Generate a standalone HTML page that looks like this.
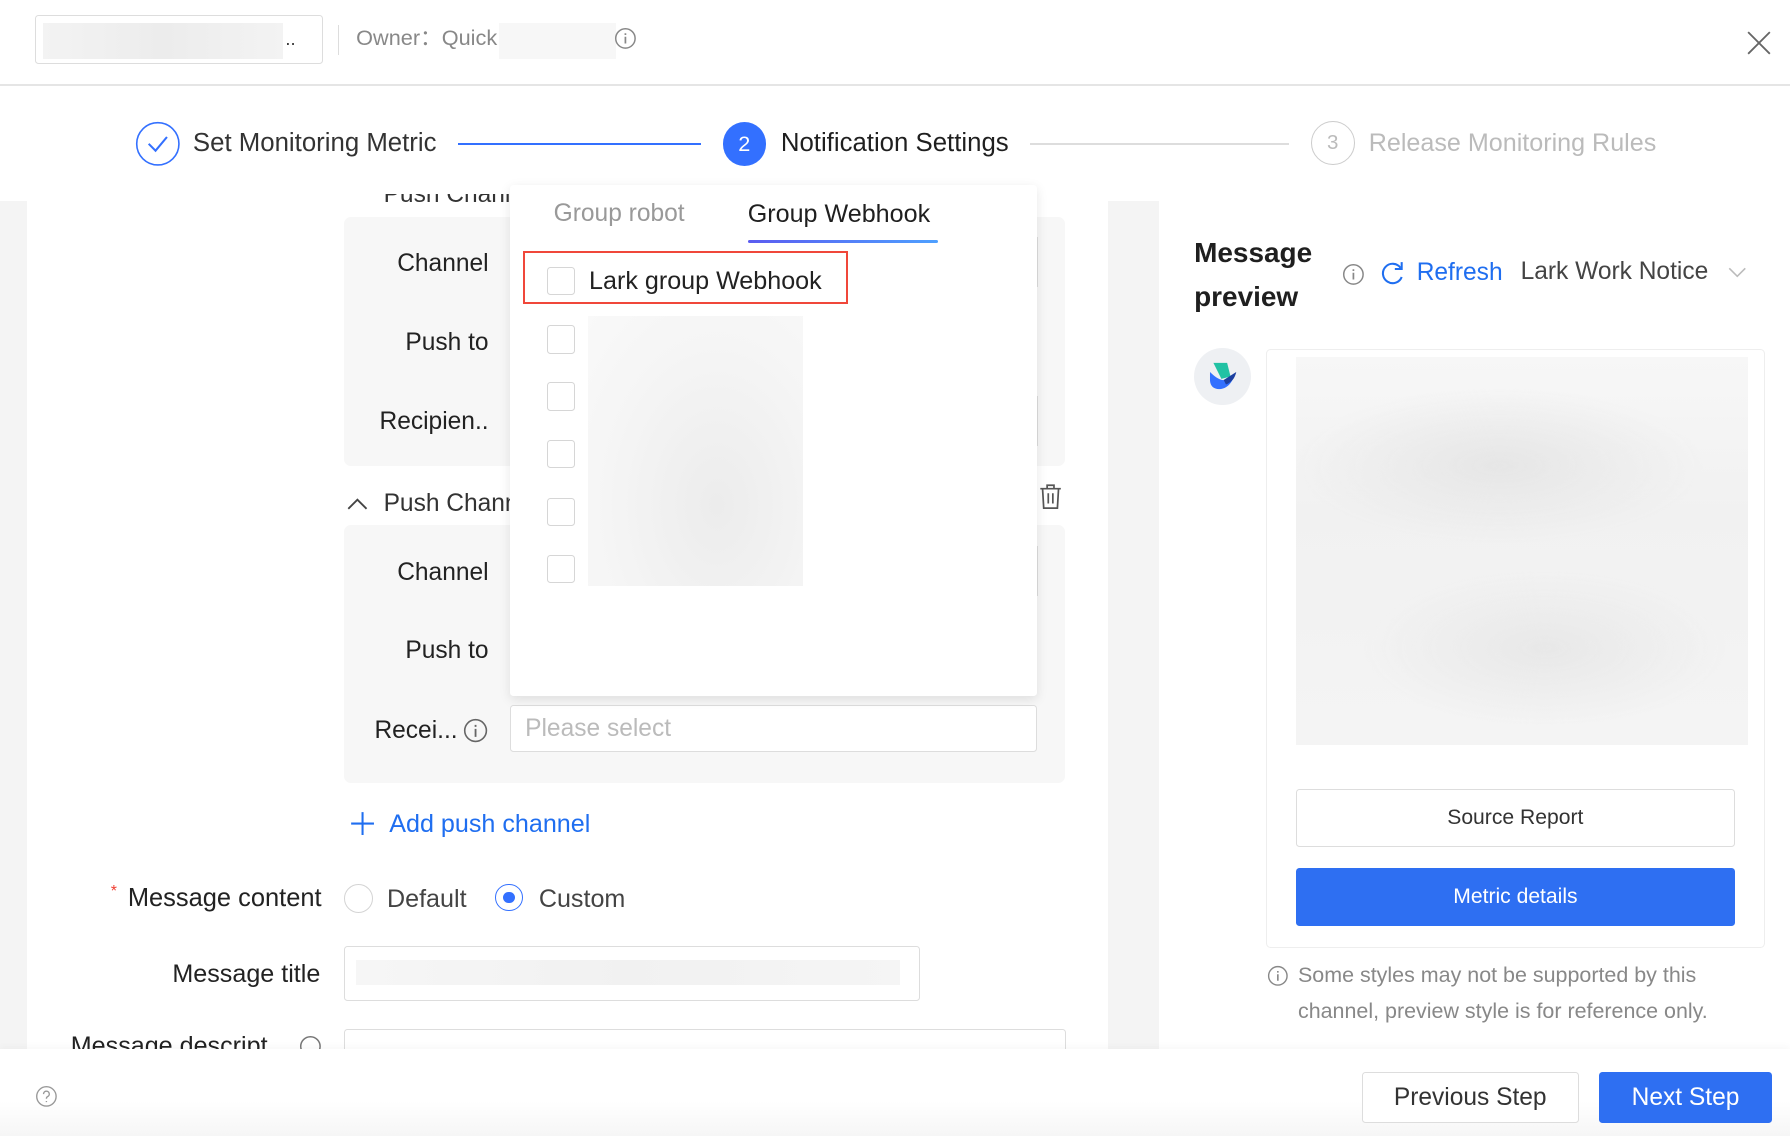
<!DOCTYPE html>
<html><head><meta charset="utf-8"><style>
html,body{margin:0;padding:0;width:1790px;height:1136px;overflow:hidden;background:#fff}
#r{position:relative;width:1568px;height:995px;zoom:1.14158;font-family:"Liberation Sans",Arial,sans-serif;color:#222;overflow:hidden;background:#fff}
.a{position:absolute}
.t{position:absolute;white-space:nowrap;line-height:1}
.cb{position:absolute;left:479px;width:23px;height:23px;border:1px solid #d6d6d6;border-radius:3px;background:#fff}
.lbl{position:absolute;font-size:21.5px;color:#222;text-align:right;width:200px;line-height:1}
</style></head><body><div id="r">
<!-- header -->
<div class="a" style="left:31px;top:13px;width:250px;height:41px;border:1px solid #ddd;border-radius:3px"></div>
<div class="a" style="left:38px;top:20px;width:210px;height:32px;background:linear-gradient(90deg,#f3f3f3,#ececec,#f3f3f3)"></div>
<div class="t" style="left:250px;top:26px;font-size:16px;color:#333">..</div>
<div class="a" style="left:296px;top:22px;width:1px;height:26px;background:#ddd"></div>
<div class="t" style="left:312px;top:24px;font-size:19px;color:#888">Owner：Quick</div>
<div class="a" style="left:437px;top:20px;width:103px;height:32px;background:#f7f7f7"></div>
<svg class="a" style="left:538px;top:24px" width="20" height="20" viewBox="0 0 20 20"><circle cx="10" cy="10" r="8.5" fill="none" stroke="#888" stroke-width="1.3"/><path d="M10 8.5v6M10 5.5v1.5" stroke="#888" stroke-width="1.5"/></svg>
<svg class="a" style="left:1530px;top:27px" width="21" height="21" viewBox="0 0 21 21"><path d="M1 1L20 20M20 1L1 20" stroke="#666" stroke-width="1.6"/></svg>
<div class="a" style="left:0;top:74px;width:1568px;height:1px;background:#e5e5e5"></div>
<!-- steps -->
<svg class="a" style="left:118px;top:106px" width="40" height="40" viewBox="0 0 40 40"><circle cx="20" cy="20" r="18.5" fill="#fff" stroke="#3370ff" stroke-width="1.4"/><path d="M12 20l6 6 10-12" fill="none" stroke="#3370ff" stroke-width="1.8"/></svg>
<div class="t" style="left:169px;top:115px;font-size:22.6px;color:#333">Set Monitoring Metric</div>
<div class="a" style="left:401px;top:125px;width:213px;height:2px;background:#3370ff"></div>
<div class="a" style="left:633px;top:107px;width:38px;height:38px;border-radius:50%;background:#3370ff;color:#fff;font-size:19px;text-align:center;line-height:38px">2</div>
<div class="t" style="left:684px;top:115px;font-size:22.6px;color:#1f1f1f">Notification Settings</div>
<div class="a" style="left:902px;top:125px;width:227px;height:2px;background:#ddd"></div>
<div class="a" style="left:1148px;top:106px;width:37px;height:37px;border-radius:50%;border:1.4px solid #ccc;color:#bbb;font-size:18px;text-align:center;line-height:37px">3</div>
<div class="t" style="left:1199px;top:115px;font-size:22px;color:#bbb">Release Monitoring Rules</div>
<!-- body bg -->
<div class="a" style="left:0;top:176px;width:24px;height:743px;background:#f4f4f4"></div>
<div class="a" style="left:971px;top:176px;width:44px;height:743px;background:#f4f4f4"></div>
<!-- left content -->
<div class="t" style="left:336px;top:160px;font-size:21.5px;color:#333;clip-path:inset(10px 0 0 0)">Push Chann</div>
<div class="a" style="left:301px;top:190px;width:632px;height:218px;background:#f7f7f7;border-radius:6px"></div>
<div class="lbl" style="left:228px;top:221px">Channel</div>
<div class="lbl" style="left:228px;top:290px">Push to</div>
<div class="lbl" style="left:228px;top:359px">Recipien..</div>
<div class="a" style="left:880px;top:208px;width:28px;height:42px;background:#fff;border:1px solid #ddd;border-left:none"></div>
<div class="a" style="left:880px;top:347px;width:28px;height:42px;background:#fff;border:1px solid #ddd;border-left:none"></div>
<svg class="a" style="left:303px;top:433px" width="20" height="16" viewBox="0 0 20 16"><path d="M2 13l8-8 8 8" fill="none" stroke="#444" stroke-width="1.6"/></svg>
<div class="t" style="left:336px;top:431px;font-size:21.5px;color:#333">Push Chann</div>
<svg class="a" style="left:909px;top:423px" width="22" height="24" viewBox="0 0 22 24"><path d="M2 5h18M8 5V2h6v3M4 5l1 17h12l1-17M9 9v9M13 9v9" fill="none" stroke="#555" stroke-width="1.5"/></svg>
<div class="a" style="left:301px;top:460px;width:632px;height:226px;background:#f7f7f7;border-radius:6px"></div>
<div class="lbl" style="left:228px;top:491px">Channel</div>
<div class="lbl" style="left:228px;top:560px">Push to</div>
<div class="t" style="left:328px;top:630px;font-size:21.5px;color:#222">Recei...</div>
<svg class="a" style="left:406px;top:629px" width="22" height="22" viewBox="0 0 22 22"><circle cx="11" cy="11" r="9.5" fill="none" stroke="#666" stroke-width="1.4"/><path d="M11 9.5v7M11 6v1.8" stroke="#666" stroke-width="1.6"/></svg>
<div class="a" style="left:880px;top:478px;width:28px;height:42px;background:#fff;border:1px solid #ddd;border-left:none"></div>
<div class="a" style="left:447px;top:618px;width:460px;height:39px;background:#fff;border:1px solid #ddd;border-radius:3px"></div>
<div class="t" style="left:460px;top:628px;font-size:21.5px;color:#bbb">Please select</div>
<svg class="a" style="left:307px;top:710px" width="22" height="22" viewBox="0 0 22 22"><path d="M11 1v20M1 11h20" stroke="#1f6ef0" stroke-width="1.8"/></svg>
<div class="t" style="left:341px;top:711px;font-size:22px;color:#1f6ef0">Add push channel</div>
<div class="t" style="left:97px;top:774px;font-size:14px;color:#f04134">*</div>
<div class="t" style="left:112px;top:776px;font-size:22.3px;color:#222">Message content</div>
<div class="a" style="left:301px;top:774px;width:24px;height:24px;border-radius:50%;border:1px solid #d4d4d4"></div>
<div class="t" style="left:339px;top:777px;font-size:22px;color:#444">Default</div>
<div class="a" style="left:434px;top:774px;width:24px;height:24px;border-radius:50%;border:1.3px solid #3370ff;box-sizing:border-box"></div>
<div class="a" style="left:441px;top:781px;width:10px;height:10px;border-radius:50%;background:#3370ff"></div>
<div class="t" style="left:472px;top:777px;font-size:22px;color:#444">Custom</div>
<div class="t" style="left:151px;top:843px;font-size:22px;color:#222">Message title</div>
<div class="a" style="left:301px;top:829px;width:503px;height:46px;border:1px solid #ddd;border-radius:3px"></div>
<div class="a" style="left:312px;top:841px;width:476px;height:22px;background:linear-gradient(90deg,#f6f6f6,#f1f1f1,#f5f5f5)"></div>
<div class="t" style="left:62px;top:906px;font-size:22px;color:#222">Message descript</div>
<svg class="a" style="left:262px;top:907px" width="20" height="20" viewBox="0 0 20 20"><circle cx="10" cy="10" r="8.5" fill="none" stroke="#777" stroke-width="1.3"/></svg>
<div class="a" style="left:301px;top:901px;width:631px;height:40px;border:1px solid #ddd;border-radius:3px"></div>
<!-- dropdown -->
<div class="a" style="left:447px;top:162px;width:461px;height:448px;background:#fff;box-shadow:0 3px 10px rgba(0,0,0,.10);border-radius:3px"></div>
<div class="t" style="left:485px;top:177px;font-size:21.5px;color:#999">Group robot</div>
<div class="t" style="left:655px;top:177px;font-size:22px;color:#1f1f1f">Group Webhook</div>
<div class="a" style="left:655px;top:210px;width:167px;height:3px;border-radius:2px;background:linear-gradient(90deg,#5b5cf0,#4ea0ff)"></div>
<div class="a" style="left:458px;top:220px;width:281px;height:43px;border:2px solid #f0473a"></div>
<div class="cb" style="top:234px"></div>
<div class="t" style="left:516px;top:236px;font-size:22px;color:#222">Lark group Webhook</div>
<div class="cb" style="top:285px"></div>
<div class="cb" style="top:335px"></div>
<div class="cb" style="top:385px"></div>
<div class="cb" style="top:436px"></div>
<div class="cb" style="top:486px"></div>
<div class="a" style="left:515px;top:277px;width:188px;height:236px;background:radial-gradient(ellipse at 60% 70%,#ececec,#f5f5f5 60%,#f9f9f9)"></div>
<!-- right panel -->
<div class="t" style="left:1046px;top:202px;font-size:24.5px;font-weight:bold;color:#1f1f1f;line-height:39px;white-space:normal;width:120px">Message preview</div>
<svg class="a" style="left:1176px;top:230px" width="20" height="20" viewBox="0 0 20 20"><circle cx="10" cy="10" r="8.5" fill="none" stroke="#888" stroke-width="1.3"/><path d="M10 8.5v6M10 5.5v1.5" stroke="#888" stroke-width="1.5"/></svg>
<svg class="a" style="left:1209px;top:229px" width="22" height="22" viewBox="0 0 22 22"><path d="M18 6A8.5 8.5 0 1 0 19 14" fill="none" stroke="#1f6ef0" stroke-width="1.8"/><path d="M19 1v6h-6" fill="none" stroke="#1f6ef0" stroke-width="1.8"/></svg>
<div class="t" style="left:1241px;top:229px;font-size:21.5px;color:#1f6ef0">Refresh</div>
<div class="t" style="left:1332px;top:228px;font-size:21.5px;color:#444">Lark Work Notice</div>
<svg class="a" style="left:1513px;top:233px" width="18" height="12" viewBox="0 0 18 12"><path d="M2 2l7 7 7-7" fill="none" stroke="#bbb" stroke-width="1.4"/></svg>
<div class="a" style="left:1046px;top:305px;width:50px;height:50px;border-radius:50%;background:#eef0f3"></div>
<svg class="a" style="left:1053px;top:312px" width="36" height="36" viewBox="0 0 36 36"><path d="M10 6h12l3 12-8 2z" fill="#21c2a4"/><path d="M7 14c4 4 9 8 14 7l8-6c-2 8-7 14-14 14-5 0-8-3-8-8z" fill="#3370ff"/><path d="M19 21l11-7c-1 5-4 9-9 11z" fill="#1c3fa0"/></svg>
<div class="a" style="left:1109px;top:306px;width:435px;height:523px;border:1px solid #eee;border-radius:4px"></div>
<div class="a" style="left:1135px;top:313px;width:396px;height:340px;background:radial-gradient(ellipse 45% 20% at 45% 28%,#e6e6e6,rgba(240,240,240,0)),radial-gradient(ellipse 40% 20% at 55% 75%,#e8e8e8,rgba(240,240,240,0)),linear-gradient(#f7f7f7,#f1f1f1 40%,#f4f4f4)"></div>
<div class="a" style="left:1135px;top:691px;width:383px;height:49px;border:1px solid #ddd;border-radius:3px;text-align:center;line-height:49px;font-size:18.5px;color:#333">Source Report</div>
<div class="a" style="left:1135px;top:760px;width:385px;height:51px;background:#2e6ff2;border-radius:3px;text-align:center;line-height:51px;font-size:18.5px;color:#fff">Metric details</div>
<svg class="a" style="left:1110px;top:845px" width="19" height="19" viewBox="0 0 20 20"><circle cx="10" cy="10" r="8.5" fill="none" stroke="#888" stroke-width="1.3"/><path d="M10 8.5v6M10 5.5v1.5" stroke="#888" stroke-width="1.5"/></svg>
<div class="t" style="left:1137px;top:845px;font-size:18.8px;color:#888">Some styles may not be supported by this</div>
<div class="t" style="left:1137px;top:877px;font-size:18.8px;color:#888">channel, preview style is for reference only.</div>
<!-- footer -->
<div class="a" style="left:0;top:919px;width:1568px;height:76px;background:linear-gradient(#fff 60%,#f6f6f6);box-shadow:0 -2px 6px rgba(0,0,0,.03)"></div>
<svg class="a" style="left:31px;top:950px" width="20" height="20" viewBox="0 0 20 20"><circle cx="10" cy="10" r="8.5" fill="none" stroke="#999" stroke-width="1.2"/><path d="M7.5 8a2.5 2.5 0 1 1 3.5 2.2c-.8.4-1 1-1 1.8M10 14v1" fill="none" stroke="#999" stroke-width="1.2"/></svg>
<div class="a" style="left:1193px;top:939px;width:188px;height:43px;border:1px solid #ddd;border-radius:3px;background:#fff;text-align:center;line-height:43px;font-size:21.5px;color:#333">Previous Step</div>
<div class="a" style="left:1401px;top:939px;width:151px;height:45px;background:#2e6ff2;border-radius:3px;text-align:center;line-height:45px;font-size:21.5px;color:#fff">Next Step</div>
</div></body></html>
